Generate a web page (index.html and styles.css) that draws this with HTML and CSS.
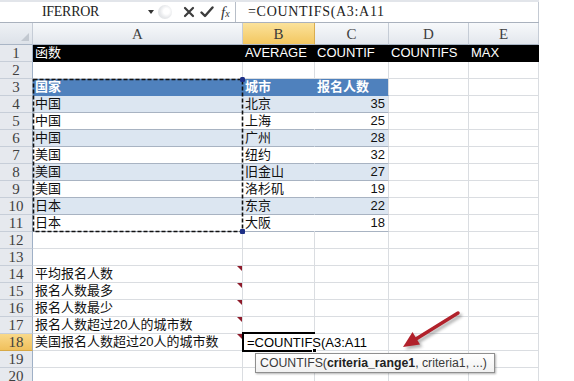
FILE: index.html
```html
<!DOCTYPE html>
<html>
<head>
<meta charset="utf-8">
<link rel="stylesheet" href="styles.css">
</head>
<body>
<div class="page">
  <div class="fbar">
    <div class="namebox"><span class="nb-text">IFERROR</span><span class="nb-arrow"></span></div>
    <div class="fb-grip"></div>
    <div class="fb-icons">
      <svg class="ic" width="12" height="12" viewBox="0 0 12 12"><path d="M2 2 L10 10 M10 2 L2 10" stroke="#3c3c3c" stroke-width="2.2" stroke-linecap="round"/></svg>
      <svg class="ic" width="14" height="12" viewBox="0 0 14 12"><path d="M1.5 6.5 L5 10 L12.5 1.5" stroke="#3c3c3c" stroke-width="2.4" fill="none" stroke-linecap="round" stroke-linejoin="round"/></svg>
      <span class="fx">f<span class="fx-x">x</span></span>
    </div>
    <div class="fb-input">=COUNTIFS(A3:A11</div>
  </div>

  <div class="sheet">
    <div class="ch corner"></div><div class="ch">A</div><div class="ch sel">B</div><div class="ch">C</div><div class="ch">D</div><div class="ch">E</div>

    <div class="rh">1</div><div class="c blk">函数</div><div class="c blk">AVERAGE</div><div class="c blk">COUNTIF</div><div class="c blk">COUNTIFS</div><div class="c blk">MAX</div>
    <div class="rh">2</div><div class="c"></div><div class="c"></div><div class="c"></div><div class="c"></div><div class="c"></div>
    <div class="rh">3</div><div class="c th tn">国家</div><div class="c th tn">城市</div><div class="c th">报名人数</div><div class="c"></div><div class="c"></div>
    <div class="rh">4</div><div class="c tb tn">中国</div><div class="c tb tn">北京</div><div class="c tb num">35</div><div class="c"></div><div class="c"></div>
    <div class="rh">5</div><div class="c tw tn">中国</div><div class="c tw tn">上海</div><div class="c tw num">25</div><div class="c"></div><div class="c"></div>
    <div class="rh">6</div><div class="c tb tn">中国</div><div class="c tb tn">广州</div><div class="c tb num">28</div><div class="c"></div><div class="c"></div>
    <div class="rh">7</div><div class="c tw tn">美国</div><div class="c tw tn">纽约</div><div class="c tw num">32</div><div class="c"></div><div class="c"></div>
    <div class="rh">8</div><div class="c tb tn">美国</div><div class="c tb tn">旧金山</div><div class="c tb num">27</div><div class="c"></div><div class="c"></div>
    <div class="rh">9</div><div class="c tw tn">美国</div><div class="c tw tn">洛杉矶</div><div class="c tw num">19</div><div class="c"></div><div class="c"></div>
    <div class="rh">10</div><div class="c tb tn">日本</div><div class="c tb tn">东京</div><div class="c tb num">22</div><div class="c"></div><div class="c"></div>
    <div class="rh">11</div><div class="c tw tn">日本</div><div class="c tw tn">大阪</div><div class="c tw num">18</div><div class="c"></div><div class="c"></div>
    <div class="rh">12</div><div class="c"></div><div class="c"></div><div class="c"></div><div class="c"></div><div class="c"></div>
    <div class="rh">13</div><div class="c"></div><div class="c"></div><div class="c"></div><div class="c"></div><div class="c"></div>
    <div class="rh">14</div><div class="c cmt">平均报名人数</div><div class="c"></div><div class="c"></div><div class="c"></div><div class="c"></div>
    <div class="rh">15</div><div class="c cmt">报名人数最多</div><div class="c"></div><div class="c"></div><div class="c"></div><div class="c"></div>
    <div class="rh">16</div><div class="c cmt">报名人数最少</div><div class="c"></div><div class="c"></div><div class="c"></div><div class="c"></div>
    <div class="rh">17</div><div class="c cmt">报名人数超过20人的城市数</div><div class="c"></div><div class="c"></div><div class="c"></div><div class="c"></div>
    <div class="rh sel">18</div><div class="c cmt">美国报名人数超过20人的城市数</div><div class="c edit">=COUNTIFS(A3:A11</div><div class="c"></div><div class="c"></div>
    <div class="rh">19</div><div class="c"></div><div class="c"></div><div class="c"></div><div class="c"></div><div class="c"></div>
    <div class="rh">20</div><div class="c"></div><div class="c"></div><div class="c"></div><div class="c"></div><div class="c"></div>
  </div>

  <svg class="overlay" width="574" height="381" viewBox="0 0 574 381">
    <rect x="33.5" y="79.5" width="209" height="152" fill="none" stroke="#111" stroke-width="1.6" stroke-dasharray="4 2"/>
    <rect x="240" y="77" width="5" height="5" rx="1.5" fill="#1d2f86"/>
    <rect x="240" y="229" width="5" height="5" rx="1" fill="#1d2f86"/>
    <defs><filter id="bl" x="-20%" y="-20%" width="140%" height="140%"><feGaussianBlur stdDeviation="1.6"/></filter></defs>
    <g transform="translate(2.5,2.5)" filter="url(#bl)" opacity="0.45">
      <line x1="458" y1="313" x2="416" y2="339" stroke="#555" stroke-width="3.5" stroke-linecap="round"/>
      <polygon points="403,347 420,344.5 412.5,332" fill="#555"/>
    </g>
    <line x1="458" y1="313" x2="416" y2="339" stroke="#b1212b" stroke-width="3.5" stroke-linecap="round"/>
    <polygon points="403,347 420,344.5 412.5,332" fill="#b1212b"/>
  </svg>

  <div class="active"></div>
  <div class="handle"></div>
  <div class="tip">COUNTIFS(<b>criteria_range1</b>, criteria1, ...)</div>
</div>
</body>
</html>
```

FILE: styles.css
```css
* { box-sizing: border-box; }
html, body { margin: 0; padding: 0; background: #fff; }
.page {
  position: relative;
  width: 574px;
  height: 381px;
  overflow: hidden;
  background: #fff;
  font-family: "Liberation Sans", "Noto Sans CJK SC", sans-serif;
}

/* formula bar */
.fbar {
  display: flex;
  width: 539px;
  height: 23px;
  border-top: 2px solid #e2e5ea;
  border-bottom: 1px solid #a9b1bd;
  background: #fff;
}
.namebox {
  width: 158px;
  position: relative;
  display: flex;
  align-items: center;
}
.nb-text {
  font-family: "Liberation Serif", serif;
  font-size: 14px;
  color: #222;
  padding-left: 42px;
  letter-spacing: -0.3px;
}
.nb-arrow {
  position: absolute;
  left: 148px;
  top: 8px;
  border-left: 3px solid transparent;
  border-right: 3px solid transparent;
  border-top: 4px solid #333;
}
.fb-grip {
  width: 14px;
  height: 14px;
  margin-top: 3px;
  border-radius: 50%;
  background: radial-gradient(circle at 60% 45%, #fff 0 25%, #e2e4e7 55%, #cfd2d6 100%);
  opacity: 0.8;
}
.fb-icons {
  display: flex;
  align-items: center;
  width: 63px;
  padding-left: 11px;
  gap: 5px;
}
.ic { display: block; }
.fx {
  font-family: "Liberation Serif", serif;
  font-style: italic;
  font-size: 15px;
  color: #333;
  margin-left: 2px;
  line-height: 1;
}
.fx-x { font-size: 10px; }
.fb-input {
  flex: 1;
  border-left: 1px solid #b7bec8;
  border-right: 1px solid #c4cad3;
  font-family: "Liberation Serif", serif;
  font-size: 14px;
  letter-spacing: 0.7px;
  color: #222;
  padding-left: 12px;
  line-height: 19px;
}

/* sheet */
.sheet {
  display: grid;
  grid-template-columns: 33px 210px 72px 74px 80px 70px;
  grid-template-rows: 22px repeat(20, 17px);
  width: 539px;
}
.ch {
  background: linear-gradient(#f7f9fb, #e3e7ed);
  border-right: 1px solid #c5ccd6;
  border-bottom: 1px solid #a9b5c5;
  text-align: center;
  font-family: "Liberation Serif", serif;
  font-size: 15px;
  line-height: 22px;
  color: #3f3f3f;
}
.ch.sel {
  background: linear-gradient(#fbe29b, #f3c760);
  border-right-color: #d9ad4f;
  color: #3a3a3a;
}
.corner { position: relative; background: linear-gradient(#eef1f5, #dde2e9); }
.corner::after {
  content: "";
  position: absolute;
  right: 3px;
  bottom: 3px;
  border-left: 8px solid transparent;
  border-bottom: 8px solid #c2c8d0;
}
.rh {
  background: #e6e9ee;
  border-right: 1px solid #9fb0c6;
  border-bottom: 1px solid #c7ced8;
  text-align: center;
  font-family: "Liberation Serif", serif;
  font-size: 15px;
  line-height: 17px;
  color: #3f3f3f;
}
.rh.sel { background: linear-gradient(#f9d98a, #f0c05c); border-bottom-color: #d7a947; }
.c {
  border-right: 1px solid #dadde1;
  border-bottom: 1px solid #dadde1;
  font-size: 13px;
  line-height: 16px;
  padding: 0 2px;
  white-space: nowrap;
  color: #111;
  position: relative;
}
.blk { background: #000; color: #fff; border-color: #000; font-size: 13px; }
.th {
  background: #4f81bd;
  color: #fff;
  font-weight: bold;
  border-bottom-color: #4f81bd;
}
.tb { background: #dce6f1; border-bottom-color: #a8b3c2; }
.tw { background: #fff; border-bottom-color: #a8b3c2; }
.tn { border-right-color: transparent; }
.num { text-align: right; padding-right: 3px; }
.cmt::after {
  content: "";
  position: absolute;
  right: 0;
  top: 0;
  border-left: 5px solid transparent;
  border-top: 5px solid #8e1b2a;
}
.edit {
  grid-column: span 2;
  background: #fff;
  padding-left: 4px;
  line-height: 17px;
  color: #000;
  font-size: 13px;
}

/* overlays */
.overlay { position: absolute; left: 0; top: 0; pointer-events: none; }
.active {
  position: absolute;
  left: 242px;
  top: 332px;
  width: 73px;
  height: 20px;
  border: 2px solid #000;
  border-right: none;
}
.handle {
  position: absolute;
  left: 312px;
  top: 348px;
  width: 5px;
  height: 5px;
  background: #000;
  border: 1px solid #fff;
}
.tip {
  position: absolute;
  left: 255px;
  top: 353px;
  width: 240px;
  height: 20px;
  border: 1px solid #8f8f8f;
  background: linear-gradient(#ffffff, #f1f1f1);
  box-shadow: 1px 1px 2px rgba(0,0,0,0.3);
  font-size: 12.3px;
  line-height: 18px;
  padding-left: 4px;
  color: #3a3a3a;
  white-space: nowrap;
}
.tip b { color: #222; }
```
